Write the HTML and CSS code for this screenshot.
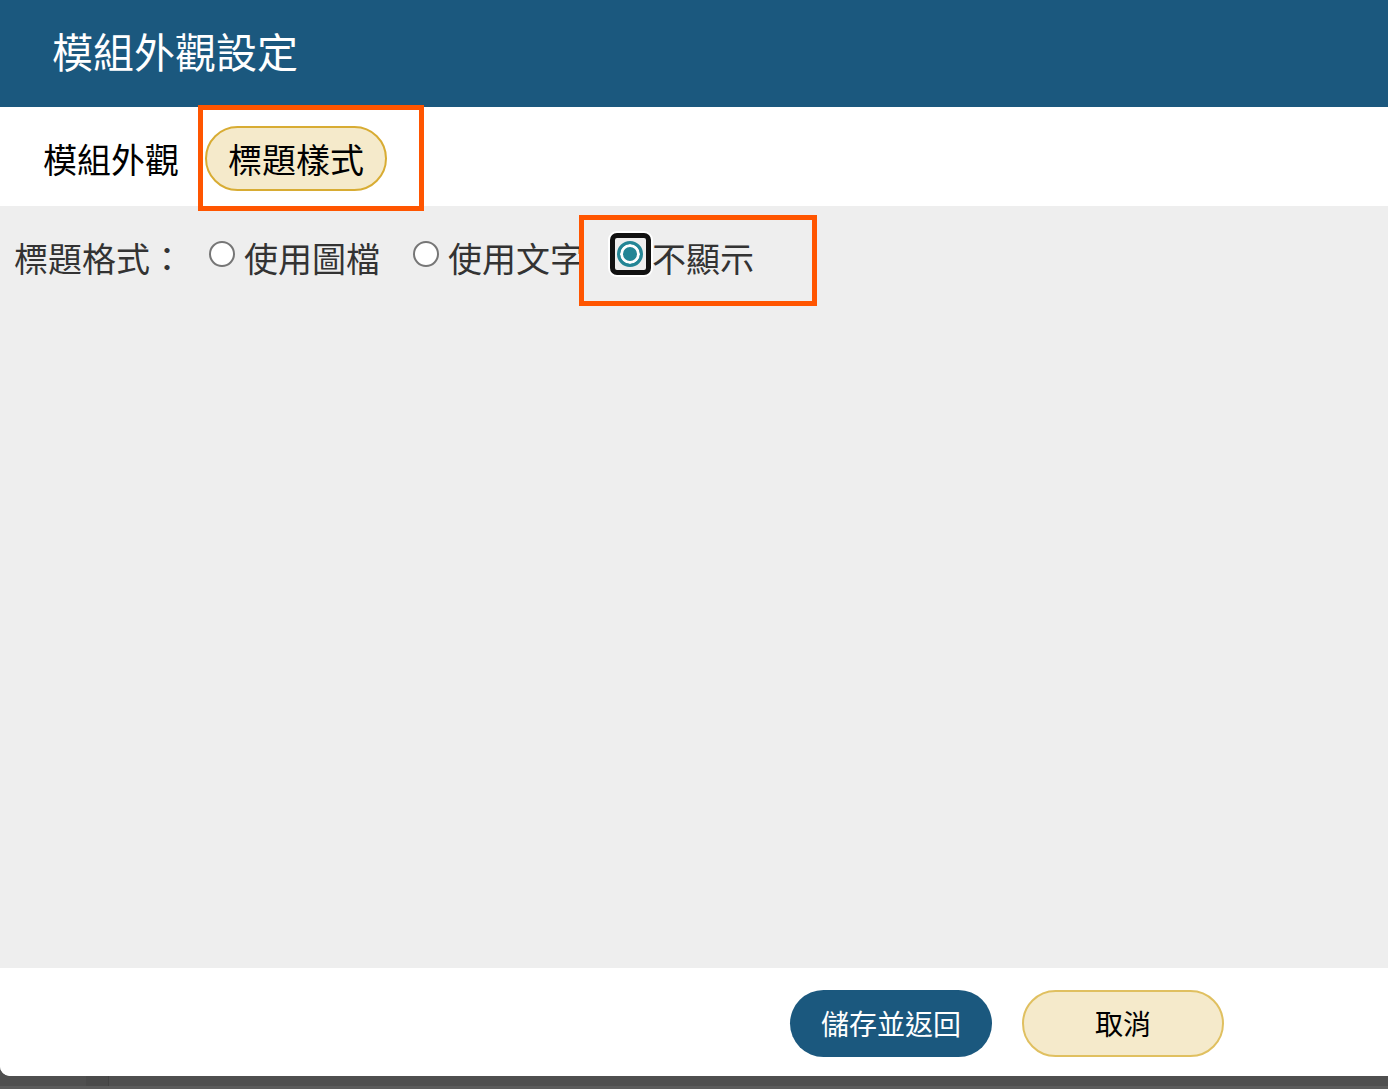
FILE: index.html
```html
<!DOCTYPE html>
<html lang="zh-Hant">
<head>
<meta charset="utf-8">
<title>模組外觀設定</title>
<link rel="stylesheet" href="styles.css">
</head>
<body>
<div class="dialog">
  <header class="dialog-header">
    <h1 class="dialog-title">模組外觀設定</h1>
  </header>
  <nav class="tabs">
    <span class="tab">模組外觀</span>
    <span class="tab tab-active">標題樣式<span class="mark mark-tab"></span></span>
  </nav>
  <main class="content">
    <div class="field-row">
      <span class="field-label">標題格式：</span>
      <label class="option"><span class="radio"></span><span class="option-text">使用圖檔</span></label>
      <label class="option"><span class="radio"></span><span class="option-text">使用文字</span></label>
      <label class="option option-selected"><span class="radio radio-checked radio-focus"></span><span class="option-text">不顯示</span><span class="mark mark-option"></span></label>
    </div>
  </main>
  <footer class="dialog-footer">
    <button class="btn btn-primary" type="button">儲存並返回</button>
    <button class="btn btn-secondary" type="button">取消</button>
  </footer>
</div>
<div class="taskbar"><span class="taskbar-slot"></span></div>
</body>
</html>
```
FILE: styles.css
```css
html, body {
  margin: 0;
  padding: 0;
}
body {
  background: #4f4f4f;
  font-family: "Noto Sans CJK TC", "Noto Sans", sans-serif;
  width: 1388px;
  height: 1089px;
  overflow: hidden;
}
.dialog {
  height: 1076px;
  display: flex;
  flex-direction: column;
  background: #ffffff;
  border-bottom-left-radius: 10px;
  overflow: hidden;
}
.dialog-header {
  height: 107px;
  flex: none;
  background: #1b587e;
  display: flex;
  align-items: center;
  padding: 0 0 6px 52px;
  box-sizing: border-box;
}
.dialog-title {
  margin: 0;
  color: #ffffff;
  font-size: 41px;
  font-weight: 400;
  line-height: 1.2;
}
.tabs {
  height: 99px;
  flex: none;
  box-sizing: border-box;
  padding: 4px 0 0 43px;
  display: flex;
  align-items: center;
  gap: 26px;
  background: #ffffff;
}
.tab {
  position: relative;
  font-size: 34px;
  color: #000000;
  line-height: 1;
}
.tab-active {
  height: 65px;
  box-sizing: border-box;
  padding: 0 21px;
  display: inline-flex;
  align-items: center;
  background: #f5eacb;
  border: 2px solid #d8ac33;
  border-radius: 33px;
}
.mark {
  position: absolute;
  border: 5px solid #ff5500;
  pointer-events: none;
}
.mark-tab {
  left: -9px;
  top: -23px;
  right: -39px;
  bottom: -22px;
}
.content {
  flex: 1;
  background: #eeeeee;
  padding: 27px 0 0 14px;
}
.field-row {
  display: flex;
  align-items: center;
  font-size: 34px;
  color: #333333;
}
.field-label {
  margin-right: 25px;
}
.option {
  position: relative;
  display: inline-flex;
  align-items: center;
  gap: 9px;
}
.option + .option {
  margin-left: 33px;
}
.option-selected {
  margin-left: 32px;
}
.radio {
  position: relative;
  width: 26px;
  height: 26px;
  margin-bottom: 8px;
  box-sizing: border-box;
  border: 2px solid #767676;
  border-radius: 50%;
  background: #ffffff;
  flex: none;
}
.radio-checked {
  border: 3px solid #238595;
  background: #238595;
  box-shadow: inset 0 0 0 3px #ffffff;
}
.radio-focus::after {
  content: "";
  position: absolute;
  left: -10px;
  top: -11px;
  right: -11px;
  bottom: -11px;
  border: 5px solid #111111;
  border-radius: 7px;
  box-shadow: 0 0 0 2px #ffffff;
}
.mark-option {
  left: -38px;
  top: -18px;
  right: -63px;
  bottom: -24px;
}
.dialog-footer {
  height: 108px;
  flex: none;
  box-sizing: border-box;
  padding: 2px 164px 0 0;
  display: flex;
  justify-content: flex-end;
  align-items: center;
  gap: 30px;
  background: #ffffff;
}
.btn {
  width: 202px;
  height: 67px;
  border-radius: 34px;
  font-family: "Noto Sans CJK TC", "Noto Sans", sans-serif;
  font-size: 28px;
  line-height: 1;
  cursor: pointer;
  padding: 0;
}
.btn-primary {
  background: #1b587e;
  color: #ffffff;
  border: none;
}
.btn-secondary {
  background: #f5eacb;
  color: #000000;
  border: 2px solid #e0c060;
}
.taskbar {
  height: 13px;
  box-sizing: border-box;
  border-bottom: 3px solid #5c5c5c;
  display: flex;
  padding-left: 86px;
}
.taskbar-slot {
  width: 22px;
  height: 10px;
  background: #4a4a4a;
  border-right: 1px solid #424242;
}
```
